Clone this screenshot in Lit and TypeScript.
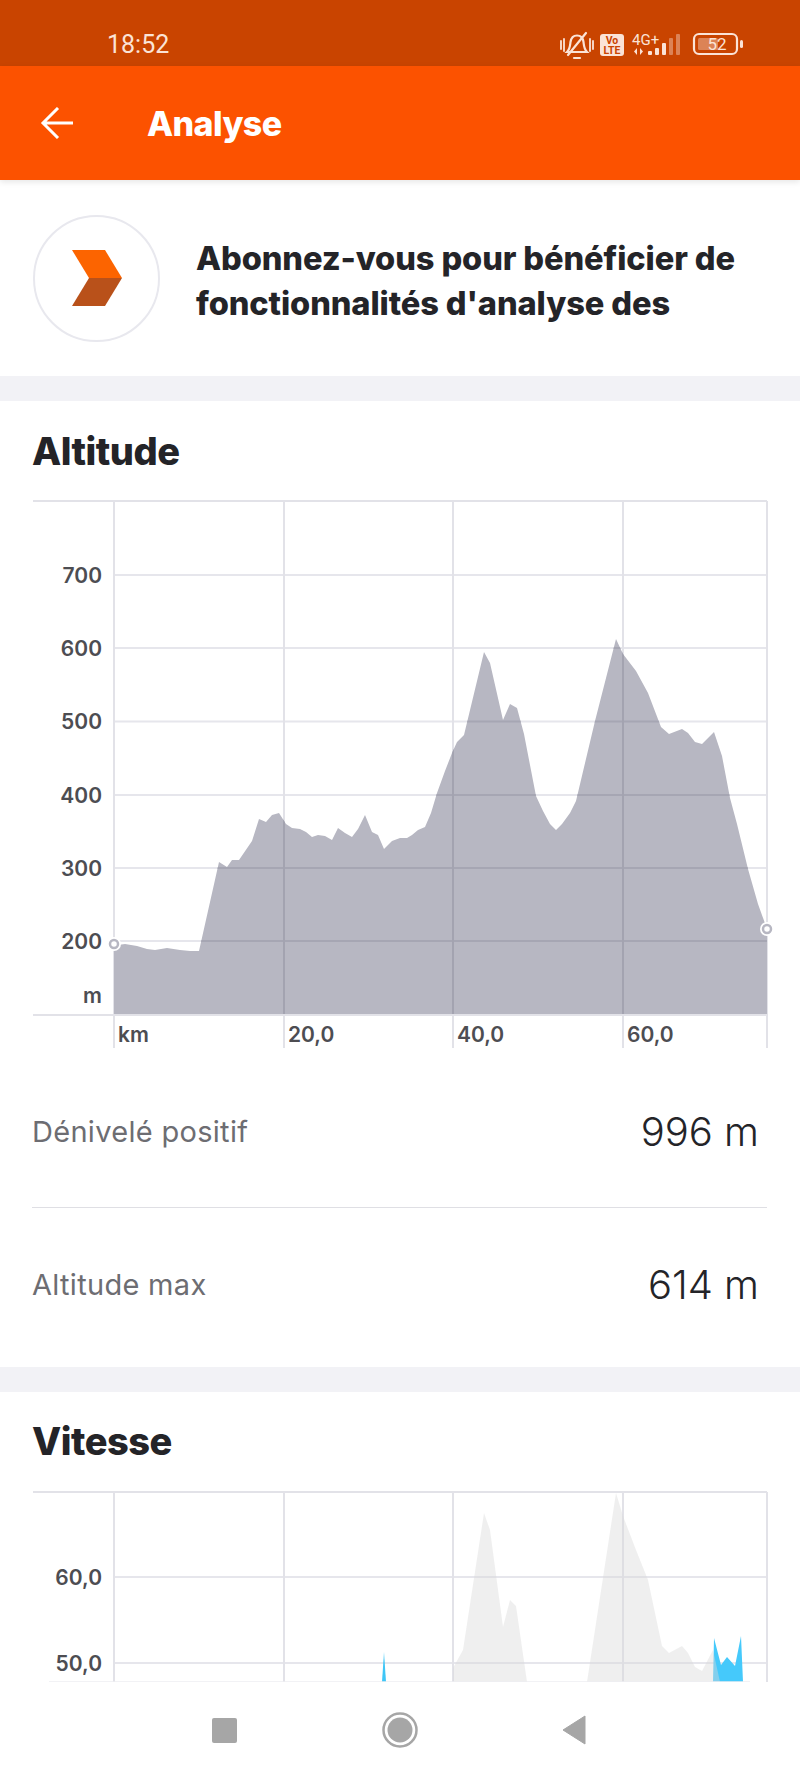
import { LitElement, css, html, svg } from 'lit';
import { customElement } from 'lit/decorators.js';

// elevation profile traced from the reference, in page coordinates
const profile: [number, number][] = [
  [114, 948], [118, 944], [125, 943], [137, 945], [147, 948], [155, 949], [167, 947], [180, 949], [190, 950], [199, 950],
  [219, 861], [227, 866], [232, 859], [239, 859], [252, 840], [259, 818], [266, 821], [272, 814], [279, 812],
  [286, 823], [292, 827], [300, 828], [306, 831], [312, 836], [318, 834], [325, 835], [332, 839], [338, 827],
  [345, 832], [352, 836], [358, 828], [365, 814], [372, 831], [378, 834], [384, 848], [392, 840], [400, 837],
  [407, 837], [412, 834], [418, 829], [425, 826], [431, 812], [437, 792], [445, 770], [452, 752], [457, 741],
  [464, 734], [484, 651], [490, 662], [503, 719], [510, 703], [517, 707], [524, 733], [536, 795], [543, 810],
  [550, 823], [556, 829], [562, 823], [570, 812], [576, 800], [595, 720], [616, 638], [623, 653], [636, 670],
  [648, 692], [661, 726], [669, 733], [682, 728], [688, 732], [695, 741], [702, 743], [714, 731], [722, 755],
  [730, 797], [737, 823], [748, 868], [758, 903], [767, 928],
];

const areaPath = (pts: [number, number][], base: number) =>
  `M${pts[0][0]} ${base}L` + pts.map(([x, y]) => `${x} ${y}`).join('L') + `L${pts[pts.length - 1][0]} ${base}Z`;

const verticals = [114, 284, 453, 623, 767];
const altRows = [
  { y: 574, label: '700' },
  { y: 647, label: '600' },
  { y: 720.5, label: '500' },
  { y: 794, label: '400' },
  { y: 867, label: '300' },
  { y: 940, label: '200' },
];
const kmLabels = [
  { x: 118, label: 'km' },
  { x: 288, label: '20,0' },
  { x: 457, label: '40,0' },
  { x: 627, label: '60,0' },
];

// the svg viewBoxes use page coordinates, these are their top edges
const ALT_TOP = 490;
const SPEED_TOP = 1482;

const greyPeaks: [number, number][] = [
  [453, 1682], [453, 1668], [463, 1650], [484, 1513], [490, 1530], [503, 1627], [510, 1600], [516, 1606], [527, 1682],
];
const greyPeaks2: [number, number][] = [
  [587, 1682], [616, 1493], [623, 1516], [636, 1550], [648, 1580], [662, 1646], [669, 1653], [682, 1646], [688, 1653],
  [695, 1667], [702, 1671], [713, 1650], [720, 1682],
];
const blueSpike: [number, number][] = [[382, 1682], [384, 1652], [386, 1682]];
const blueEnd: [number, number][] = [
  [713, 1682], [714, 1638], [721, 1665], [727, 1657], [735, 1666], [741, 1636], [743, 1682],
];

const poly = (pts: [number, number][]) => pts.map(([x, y]) => `${x},${y}`).join(' ');

@customElement('app-root')
export class AppRoot extends LitElement {
  static styles = css`
    :host {
      display: block;
      width: 800px;
      height: 1778px;
      position: relative;
      overflow: hidden;
      background: #fff;
      font-family: Inter, 'Liberation Sans', sans-serif;
      color: #242428;
    }

    .status {
      height: 66px;
      background: #c94400;
      color: #fbe3d6;
      display: flex;
      align-items: center;
      padding: 20px 0 0 107px;
      box-sizing: border-box;
    }

    .time {
      font-family: Roboto, sans-serif;
      font-size: 25px;
      padding-top: 3px;
    }

    .status-icons {
      margin-left: auto;
      margin-right: 54px;
      display: block;
    }

    .appbar {
      height: 114px;
      background: #fc5200;
      display: flex;
      align-items: center;
      box-shadow: 0 2px 6px rgba(0, 0, 0, 0.1);
      position: relative;
    }

    .back {
      margin-left: 40px;
      display: block;
    }

    .appbar h1 {
      margin: 0 0 0 73px;
      font-size: 34px;
      font-weight: 800;
      color: #fff;
      letter-spacing: -0.6px;
    }

    .promo {
      height: 196px;
      display: flex;
      align-items: center;
      padding-left: 33px;
      gap: 36px;
    }

    .badge {
      width: 127px;
      height: 127px;
      flex: none;
      border-radius: 50%;
      border: 2px solid #e8e8ee;
      box-sizing: border-box;
      display: flex;
      align-items: center;
      justify-content: center;
    }

    .promo p {
      margin: 0;
      font-size: 32.6px;
      line-height: 45px;
      font-weight: 800;
      letter-spacing: -0.1px;
      padding-top: 6px;
    }

    .band {
      height: 25px;
      background: #f2f2f6;
    }

    h2 {
      margin: 0 0 17px;
      padding: 27px 0 0 32px;
      font-size: 38px;
      line-height: 46px;
      font-weight: 800;
      letter-spacing: -0.5px;
    }

    .chart {
      display: block;
    }

    .chart text {
      font-family: Inter, 'Liberation Sans', sans-serif;
      font-size: 21px;
      font-weight: 600;
      fill: #4d4d52;
    }

    .stats {
      margin: 0 33px 0 32px;
    }

    .stat {
      display: flex;
      align-items: center;
      justify-content: space-between;
      height: 147px;
      padding: 0 8px 6px 0;
      box-sizing: border-box;
      border-bottom: 1px solid #dfdfe4;
      font-size: 29px;
      letter-spacing: 0.3px;
      color: #6d6d72;
    }

    .stat:last-child {
      border-bottom: none;
      height: 159px;
    }

    .stat b {
      font-weight: 300;
      font-size: 40px;
      letter-spacing: 0;
      color: #242428;
    }

    .speed-title {
      padding-top: 26px;
      margin-bottom: 18px;
    }

    .navbar {
      position: absolute;
      left: 0;
      right: 0;
      bottom: 0;
      height: 96px;
      background: #fff;
      display: flex;
      align-items: center;
      justify-content: center;
    }
  `;

  private altitudeChart() {
    const top = ALT_TOP;
    return html`<svg class="chart" width="800" height="570" viewBox="0 ${top} 800 570">
      ${svg`
      <clipPath id="under"><path d=${areaPath(profile, 1013)} /></clipPath>
      <line x1="33" x2="767" y1="500" y2="500" stroke="#e2e2e8" stroke-width="2" />
      ${altRows.map(r => svg`<line x1="114" x2="767" y1=${r.y} y2=${r.y} stroke="#e6e6ec" stroke-width="2" />`)}
      ${verticals.map(x => svg`<line x1=${x} x2=${x} y1="500" y2="1047" stroke="#e2e2e8" stroke-width="2" />`)}
      <path d=${areaPath(profile, 1013)} fill="#b7b7c2" />
      <g clip-path="url(#under)">
        ${altRows.map(r => svg`<line x1="114" x2="767" y1=${r.y} y2=${r.y} stroke="#a6a6b3" stroke-width="2" />`)}
        ${verticals.slice(1, 4).map(x => svg`<line x1=${x} x2=${x} y1="500" y2="1013" stroke="#a3a3b0" stroke-width="2" />`)}
      </g>
      <line x1="33" x2="767" y1="1014" y2="1014" stroke="#e2e2e8" stroke-width="2" />
      ${altRows.map(r => svg`<text x="102" y=${r.y + 7.5} text-anchor="end">${r.label}</text>`)}
      <text x="102" y="1002" text-anchor="end">m</text>
      ${kmLabels.map(k => svg`<text x=${k.x} y="1041">${k.label}</text>`)}
      <circle cx="114" cy="943" r="7" fill="#fff" />
      <circle cx="114" cy="943" r="4" fill="#fff" stroke="#b7b7c2" stroke-width="2.500" />
      <circle cx="767" cy="928" r="7" fill="#fff" />
      <circle cx="767" cy="928" r="4" fill="#fff" stroke="#b7b7c2" stroke-width="2.500" />
      `}
    </svg>`;
  }

  private speedChart() {
    const top = SPEED_TOP;
    return html`<svg class="chart" width="800" height="200" viewBox="0 ${top} 800 200">
      ${svg`
      <line x1="33" x2="767" y1="1492" y2="1492" stroke="#e2e2e8" stroke-width="2" />
      <line x1="114" x2="767" y1="1577" y2="1577" stroke="#e6e6ec" stroke-width="2" />
      <line x1="114" x2="767" y1="1663" y2="1663" stroke="#e6e6ec" stroke-width="2" />
      ${verticals.map(x => svg`<line x1=${x} x2=${x} y1="1492" y2="1682" stroke="#e2e2e8" stroke-width="2" />`)}
      <polygon points=${poly(blueSpike)} fill="#3fc6f7" />
      <polygon points=${poly(blueEnd)} fill="#45c9fb" />
      <polygon points=${poly(greyPeaks)} fill="#d8d8d8" fill-opacity="0.42" />
      <polygon points=${poly(greyPeaks2)} fill="#d8d8d8" fill-opacity="0.42" />
      <line x1="49" x2="750" y1="1682" y2="1682" stroke="#eeeef2" stroke-width="1.500" />
      <text x="102" y="1585" text-anchor="end">60,0</text>
      <text x="102" y="1671" text-anchor="end">50,0</text>
      `}
    </svg>`;
  }

  render() {
    return html`
      <div class="status">
        <span class="time">18:52</span>
        <svg class="status-icons" width="190" height="34" viewBox="556 26 190 34" fill="none">
          <g stroke="#fbe3d6" stroke-width="2.200" stroke-linecap="round">
            <path d="M567 52c3-3 3-6 3.500-10 .6-4 3-6.500 6.500-6.500s6 2.500 6.500 6.500c.5 4 .5 7 3.500 10z" />
            <path d="M568 55 586 33" />
            <path d="M574 58h6" />
            <path d="M561 41v8M564 39v12M590 39v12M593 41v8" stroke-width="1.800" />
          </g>
          <rect x="600" y="34" width="24" height="22" rx="3" fill="#fbe3d6" />
          <text x="612" y="44" text-anchor="middle" font-family="Roboto, sans-serif" font-size="10.500" font-weight="700" fill="#c94400">Vo</text>
          <text x="612" y="54" text-anchor="middle" font-family="Roboto, sans-serif" font-size="10.500" font-weight="700" fill="#c94400">LTE</text>
          <text x="632" y="45" font-family="Roboto, sans-serif" font-size="15" fill="#fbe3d6">4G+</text>
          <g fill="#fbe3d6">
            <path d="M637 48v7l-3-3.500zM640 48v7l3-3.500z" />
            <rect x="648" y="51" width="4" height="4" rx="1" />
            <rect x="655" y="48" width="4" height="7" rx="1" />
            <rect x="662" y="43" width="4" height="12" rx="1" />
            <rect x="669" y="38" width="4" height="17" rx="1" fill-opacity="0.4" />
            <rect x="676" y="34" width="4" height="21" rx="1" fill-opacity="0.4" />
          </g>
          <rect x="694" y="34" width="43" height="20" rx="5" stroke="#fbe3d6" stroke-width="2.200" />
          <rect x="698" y="38" width="20" height="12" rx="1.500" fill="#fbe3d6" fill-opacity="0.4" />
          <rect x="740" y="40" width="3" height="8" rx="1.500" fill="#fbe3d6" />
          <text x="717" y="50" text-anchor="middle" font-family="Roboto, sans-serif" font-size="17" fill="#fbe3d6">52</text>
        </svg>
      </div>
      <div class="appbar">
        <svg class="back" width="34" height="32" viewBox="0 0 34 32" fill="none" stroke="#fff" stroke-width="3">
          <path d="M33 16H3M18 1 3 16l15 15" />
        </svg>
        <h1>Analyse</h1>
      </div>
      <div class="promo">
        <div class="badge">
          <svg width="50" height="56" viewBox="0 0 50 56">
            <path d="M0 0h33l17 28H17z" fill="#fc6400" />
            <path d="M17 28h33L33 56H0z" fill="#b9511a" />
          </svg>
        </div>
        <p>Abonnez-vous pour bénéficier de<br />fonctionnalités d'analyse des</p>
      </div>
      <div class="band"></div>
      <h2>Altitude</h2>
      ${this.altitudeChart()}
      <div class="stats">
        <div class="stat"><span>Dénivelé positif</span><b>996 m</b></div>
        <div class="stat"><span>Altitude max</span><b>614 m</b></div>
      </div>
      <div class="band"></div>
      <h2 class="speed-title">Vitesse</h2>
      ${this.speedChart()}
      <div class="navbar">
        <svg width="400" height="40" viewBox="0 0 400 40">
          <rect x="12" y="8" width="25" height="25" rx="2" fill="#a6a6a6" />
          <circle cx="200" cy="20" r="16.500" fill="none" stroke="#a6a6a6" stroke-width="2.500" />
          <circle cx="200" cy="20" r="12.500" fill="#a6a6a6" />
          <path d="M385 6v28l-22-14z" fill="#a6a6a6" stroke="#a6a6a6" stroke-width="1" stroke-linejoin="round" />
        </svg>
      </div>
    `;
  }
}
